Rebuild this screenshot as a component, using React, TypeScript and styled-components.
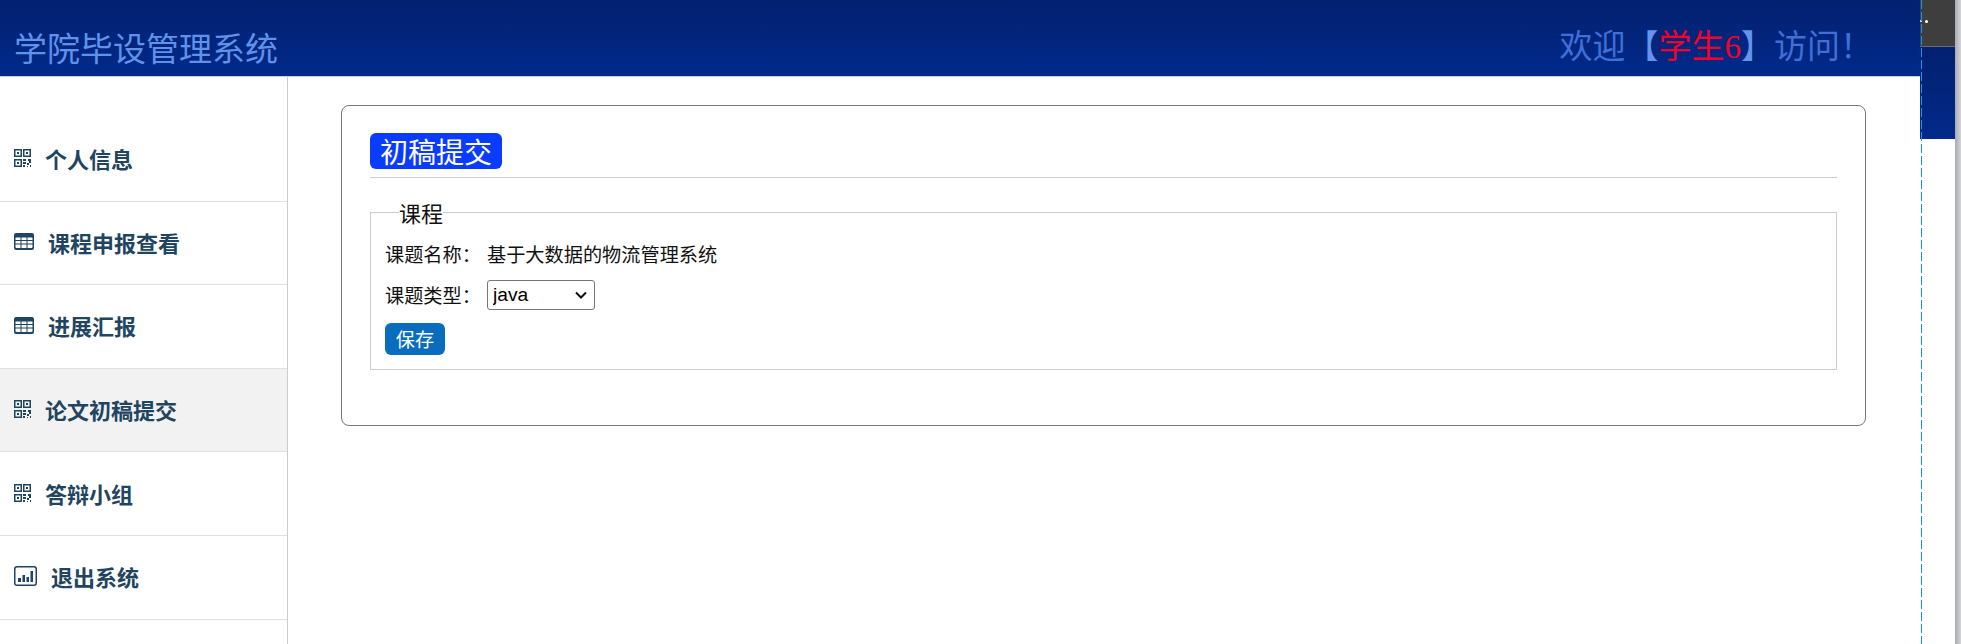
import React from "react";
import styled, { createGlobalStyle } from "styled-components";

const Global = createGlobalStyle`
  html, body { margin: 0; padding: 0; background: #fff; overflow: hidden; }
  * { box-sizing: border-box; }
  body { font-family: "Liberation Sans", "Noto Sans CJK SC", sans-serif; }
`;

const Page = styled.div`
  position: relative;
  display: flex;
  width: 1961px;
  height: 644px;
  overflow: hidden;
`;
const Main = styled.div`
  width: 1920px;
  display: flex;
  flex-direction: column;
`;
const Header = styled.header`
  height: 77px;
  flex: none;
  display: flex;
  justify-content: space-between;
  padding: 23px 47px 0 14px;
  background: linear-gradient(180deg, #03206f 0%, #012a8a 100%);
  border-bottom: 1px solid #c9ced8;
`;
const Brand = styled.h1`
  margin: 0;
  font: 400 33px/48px "Noto Sans CJK SC", sans-serif;
  color: #5f92ea;
`;
const Welcome = styled.div`
  margin-top: 1px;
  font: 400 33px/46px "Liberation Serif", "Noto Sans CJK SC", serif;
  color: #3f6fd8;
  white-space: pre;
`;
const Bracket = styled.span`
  color: #6494ec;
`;
const UserName = styled.span`
  color: #f5002a;
`;
const Body = styled.div`
  flex: 1;
  display: flex;
  min-height: 0;
`;
const Sidebar = styled.nav`
  width: 288px;
  flex: none;
  border-right: 1px solid #cccccc;
  padding-top: 41px;
`;
const NavItem = styled.div<{ $active?: boolean }>`
  height: 83.6px;
  display: flex;
  align-items: center;
  gap: 14px;
  padding: 0 0 2px 14px;
  border-bottom: 1px solid #e0e0e0;
  background: ${(p) => (p.$active ? "#f2f2f2" : "#ffffff")};
  color: #1f4560;
  font: 700 22px/30px "Noto Sans CJK SC", sans-serif;
`;
const Content = styled.main`
  flex: 1;
  padding: 28px 54px 0 53px;
`;
const Card = styled.section`
  height: 321px;
  border: 1px solid #777777;
  border-radius: 8px;
  padding: 27px 28px 0;
`;
const TitleRow = styled.div`
  height: 45px;
  border-bottom: 1px solid #cfcfcf;
`;
const TitleBadge = styled.span`
  display: inline-block;
  height: 36px;
  padding: 0 10px;
  border-radius: 6px;
  background: #0a3cff;
  color: #ffffff;
  font: 400 28px/36px "Noto Sans CJK SC", sans-serif;
`;
const Field = styled.fieldset`
  margin: 21px 0 0;
  padding: 8px 14px 0;
  height: 171px;
  border: 1px solid #cccccc;
`;
const Legend = styled.legend`
  margin-left: 14px;
  padding: 0;
  color: #111111;
  font: 400 22px/26px "Noto Sans CJK SC", sans-serif;
`;
const Row = styled.div`
  display: flex;
  align-items: center;
  height: 41px;
  font: 400 19.2px/28px "Noto Sans CJK SC", sans-serif;
  color: #111111;
`;
const Label = styled.span`
  width: 102px;
  flex: none;
`;
const SelectBox = styled.span`
  position: relative;
  display: block;
  width: 108px;
  height: 30px;
`;
const TypeSelect = styled.select`
  appearance: none;
  display: block;
  width: 100%;
  height: 100%;
  border: 1px solid #767676;
  border-radius: 3px;
  background: #ffffff;
  color: #000000;
  font: 400 19.2px "Liberation Sans", sans-serif;
  padding: 0 0 0 5px;
`;
const Chevron = styled.svg`
  position: absolute;
  top: 11px;
  right: 8px;
  pointer-events: none;
`;
const SaveButton = styled.button`
  display: block;
  width: 60px;
  height: 32px;
  margin-top: 8px;
  border: 0;
  border-radius: 6px;
  background: #0a6cbd;
  color: #ffffff;
  padding: 0;
  font: 400 19.2px/30px "Noto Sans CJK SC", sans-serif;
`;
const Rail = styled.aside`
  width: 35px;
  flex: none;
`;
const RailDark = styled.div`
  position: relative;
  height: 47px;
  background: #3e3e3e;
  border-bottom: 1px solid #6b6b6b;
`;
const RailDot = styled.i<{ $size: number; $left: number }>`
  position: absolute;
  top: 20px;
  left: ${(p) => p.$left}px;
  width: ${(p) => p.$size}px;
  height: ${(p) => p.$size}px;
  background: #ffffff;
  border-radius: 50%;
`;
const RailBlue = styled.div`
  height: 92px;
  background: linear-gradient(180deg, #03206f 0%, #012a8a 100%);
`;
const ScrollEdge = styled.div`
  width: 6px;
  flex: none;
  background: linear-gradient(90deg, #a9abb2, #d4d5d9);
`;
const GuideLine = styled.div`
  position: absolute;
  top: 0;
  bottom: 0;
  left: 1921px;
  width: 1px;
  background: repeating-linear-gradient(180deg, #1493f0 0 9px, transparent 9px 12px);
`;
const IconSvg = styled.svg`
  flex: none;
  fill: #1f4560;
`;

const QrIcon = () => (
  <IconSvg width="17" height="18" viewBox="0 0 17 18">
    <path
      fillRule="evenodd"
      d="M0 0h8v8H0zM1.500 1.500v5h5v-5zM9 0h8v8H9zM10.500 1.500v5h5v-5zM0 10h8v8H0zM1.500 11.500v5h5v-5z"
    />
    <path d="M3 3h2v2H3zM12 3h2v2h-2zM3 13h2v2H3zM9 10h3v2H9zM14 10h3v4h-2v-2h-1zM9 13h3v2H9zM9 16h2v2H9zM13 14h2v2h-2zM13 17h1v1h-1zM16 16h1v2h-1z" />
  </IconSvg>
);
const TableIcon = () => (
  <IconSvg width="20" height="17" viewBox="0 0 20 17">
    <path
      fillRule="evenodd"
      d="M2 0h16a2 2 0 0 1 2 2v13a2 2 0 0 1-2 2H2a2 2 0 0 1-2-2V2a2 2 0 0 1 2-2zM1.500 4.500v2.500h5V4.500zM7.500 4.500v2.500h5V4.500zM13.500 4.500v2.500h5V4.500zM1.500 8v2.500h5V8zM7.500 8v2.500h5V8zM13.500 8v2.500h5V8zM1.500 11.500v2.500a1 1 0 0 0 1 1h4v-3.500zM7.500 11.500V15h5v-3.500zM13.500 11.500V15h4a1 1 0 0 0 1-1v-2.500z"
    />
  </IconSvg>
);
const BarsIcon = () => (
  <IconSvg width="23" height="20" viewBox="0 0 23 20">
    <path
      fillRule="evenodd"
      d="M3 0h17a3 3 0 0 1 3 3v14a3 3 0 0 1-3 3H3a3 3 0 0 1-3-3V3a3 3 0 0 1 3-3zM3 1.500A1.500 1.500 0 0 0 1.500 3v14A1.500 1.500 0 0 0 3 18.500h17a1.500 1.500 0 0 0 1.500-1.500V3A1.500 1.500 0 0 0 20 1.500z"
    />
    <path d="M4 12h3v4H4zM8.500 9h2.500v7H8.500zM12.500 11h2.500v5h-2.500zM16.500 5h2.500v11h-2.500z" />
  </IconSvg>
);

const items = [
  { label: "个人信息", icon: <QrIcon /> },
  { label: "课程申报查看", icon: <TableIcon /> },
  { label: "进展汇报", icon: <TableIcon /> },
  { label: "论文初稿提交", icon: <QrIcon />, active: true },
  { label: "答辩小组", icon: <QrIcon /> },
  { label: "退出系统", icon: <BarsIcon /> },
];

export default function App() {
  return (
    <Page>
      <Global />
      <Main>
        <Header>
          <Brand>学院毕设管理系统</Brand>
          <Welcome>
            欢迎<Bracket>【</Bracket>
            <UserName>学生6</UserName>
            <Bracket>】</Bracket>访问！
          </Welcome>
        </Header>
        <Body>
          <Sidebar>
            {items.map((it) => (
              <NavItem key={it.label} $active={it.active}>
                {it.icon}
                {it.label}
              </NavItem>
            ))}
          </Sidebar>
          <Content>
            <Card>
              <TitleRow>
                <TitleBadge>初稿提交</TitleBadge>
              </TitleRow>
              <Field>
                <Legend>课程</Legend>
                <Row>
                  <Label>课题名称：</Label>
                  基于大数据的物流管理系统
                </Row>
                <Row>
                  <Label>课题类型：</Label>
                  <SelectBox>
                    <TypeSelect defaultValue="java">
                      <option value="java">java</option>
                    </TypeSelect>
                    <Chevron width="12" height="8" viewBox="0 0 12 8">
                      <path d="M1 1.500l5 5 5-5" fill="none" stroke="#111" strokeWidth="2" />
                    </Chevron>
                  </SelectBox>
                </Row>
                <SaveButton>保存</SaveButton>
              </Field>
            </Card>
          </Content>
        </Body>
      </Main>
      <Rail>
        <RailDark>
          <RailDot $size={2} $left={0} />
          <RailDot $size={3} $left={5} />
        </RailDark>
        <RailBlue />
      </Rail>
      <ScrollEdge />
      <GuideLine />
    </Page>
  );
}
